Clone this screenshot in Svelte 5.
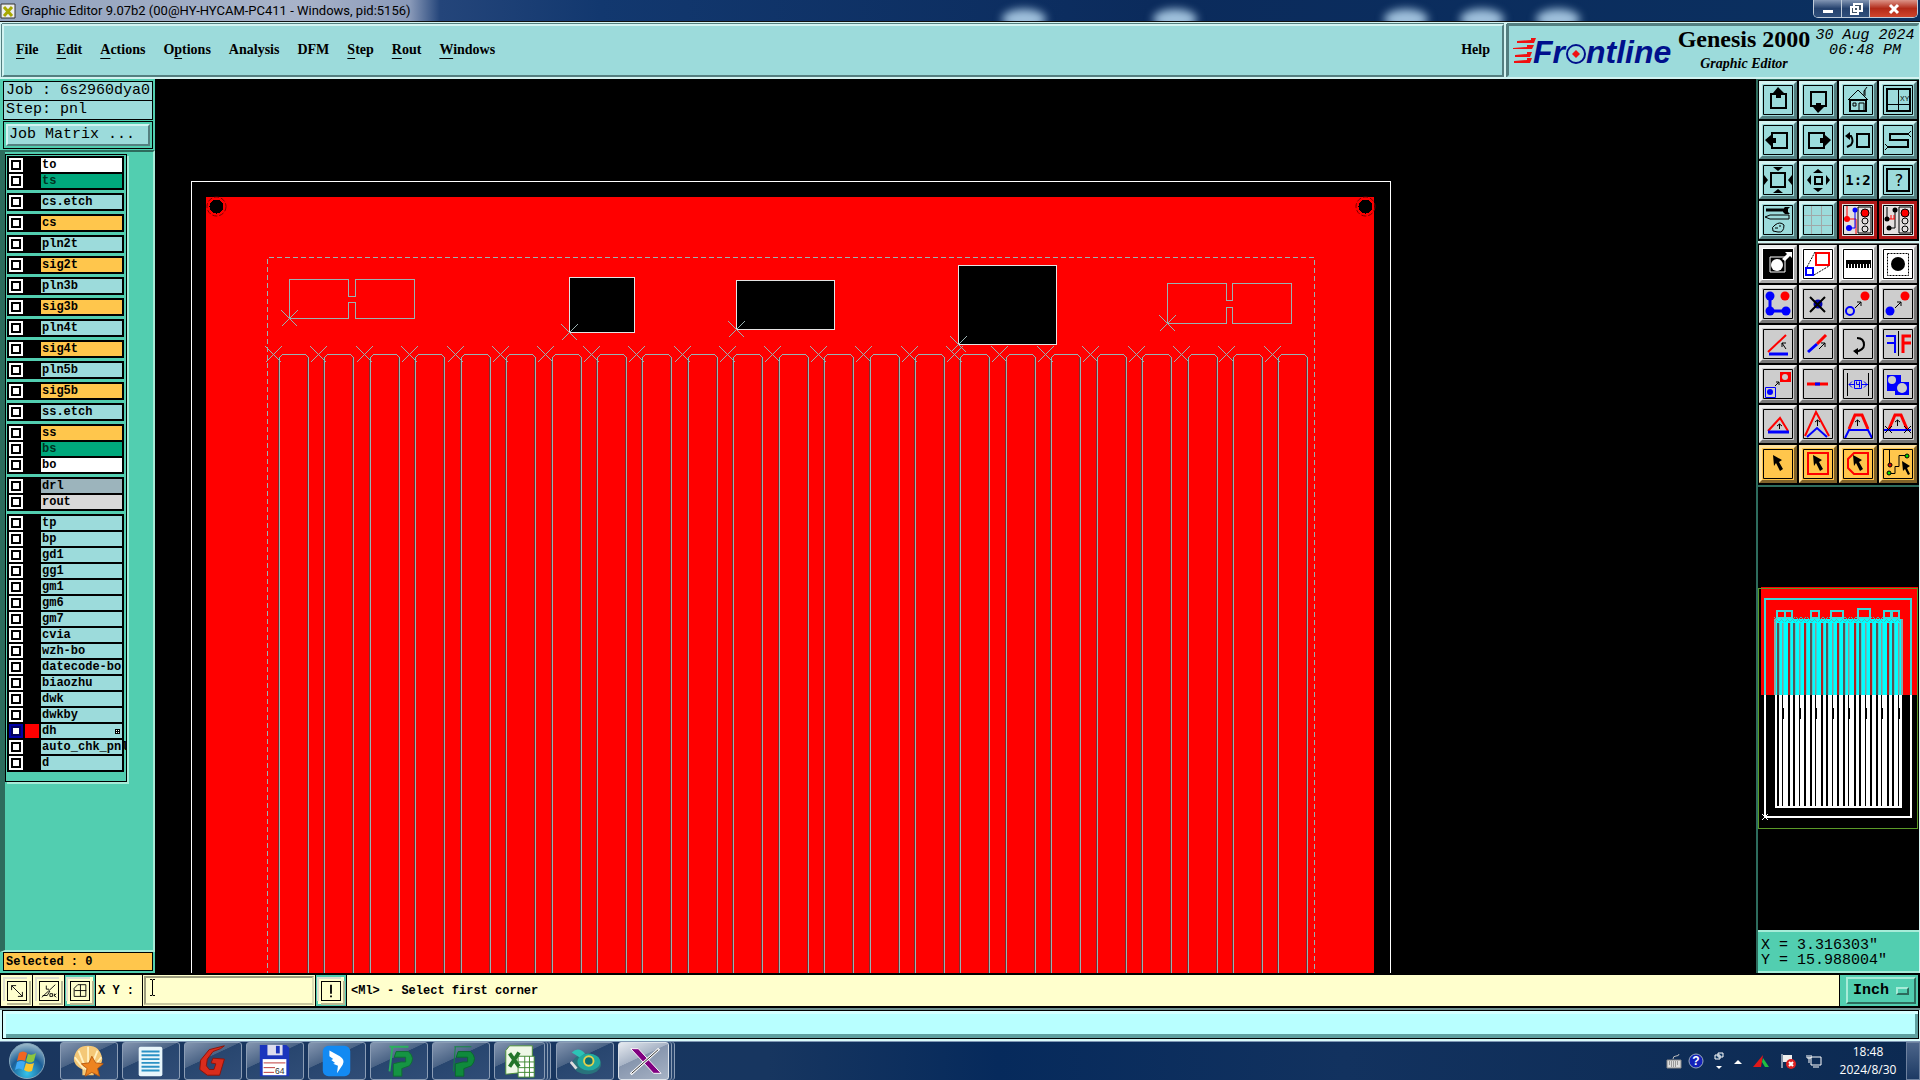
<script lang="ts">
  /**
   * Genesis 2000 graphic editor workspace: menu bar, layer list, panel view,
   * tool palette with overview map, command line and the desktop taskbar.
   */
  interface Layer { name: string; kind: string; active?: boolean }
  interface Tool { label: string; art: string; look?: string }

  const menus = [
    ["", "F", "ile"], ["", "E", "dit"], ["", "A", "ctions"], ["O", "p", "tions"], ["Analysis", "", ""],
    ["DFM", "", ""], ["", "S", "tep"], ["", "R", "out"], ["", "W", "indows"],
  ];

  const aqua = (...names: string[]): Layer[] => names.map((name) => ({ name, kind: "misc" }));
  const signal = (name: string): Layer[] => [{ name, kind: "signal" }];

  const groups: Layer[][] = [
    [{ name: "to", kind: "paste" }, { name: "ts", kind: "mask" }],
    aqua("cs.etch"), signal("cs"), aqua("pln2t"), signal("sig2t"), aqua("pln3b"), signal("sig3b"),
    aqua("pln4t"), signal("sig4t"), aqua("pln5b"), signal("sig5b"), aqua("ss.etch"),
    [{ name: "ss", kind: "signal" }, { name: "bs", kind: "mask" }, { name: "bo", kind: "paste" }],
    [{ name: "drl", kind: "drill" }, { name: "rout", kind: "rout" }],
    [
      ...aqua("tp", "bp", "gd1", "gg1", "gm1", "gm6", "gm7", "cvia", "wzh-bo", "datecode-bo", "biaozhu", "dwk", "dwkby"),
      { name: "dh", kind: "misc", active: true },
      ...aqua("auto_chk_pnl", "d"),
    ],
  ];

  const K = 'fill="none" stroke="#000"';
  const R = 'fill="none" stroke="#f00"';
  const B = 'fill="none" stroke="#00f"';

  const viewTools: Tool[] = [
    { label: "Pan up", art: `<path d="M8 9h15v14h-15z" ${K} stroke-width="2"/><path d="M15 2l6 6h-3v5h-5v-5h-3z"/>` },
    { label: "Pan down", art: `<path d="M8 7h15v14h-15z" ${K} stroke-width="2"/><path d="M15 28l6-6h-3v-4h-5v4h-3z"/>` },
    { label: "Home", art: `<path d="M5 15L15 5l10 10M21 10V6l3-4M22 11V5" ${K}/><path d="M7 14v12h16v-12M6 15h18" ${K} stroke-width="2"/><path d="M10 18h3v3h-3zM16 26v-8h5v8" ${K}/>` },
    { label: "Coordinates", art: `<path d="M4 4h23v22h-23z" ${K} stroke-width="2"/><path d="M15.5 4v22M4 19.5h23" ${K}/><text x="17" y="16" font-size="7" font-family="Liberation Sans">XY</text>` },
    { label: "Pan left", art: `<path d="M9 8h15v15h-15z" ${K} stroke-width="2"/><path d="M2 15l6-5v3h5v5h-5v3z"/>` },
    { label: "Pan right", art: `<path d="M6 8h15v15h-15z" ${K} stroke-width="2"/><path d="M28 15l-6-5v3h-5v5h5v3z"/>` },
    { label: "Previous view", art: `<path d="M14 9h12v13h-12z" ${K} stroke-width="2"/><path d="M4 11h4q3 5 0 9l-4 2" ${K} stroke-width="2"/><path d="M2 11l5-4v8z"/>` },
    { label: "Serpentine", art: `<path d="M25 9H7v6h18v7H5" ${K} stroke-width="2"/><path d="M25 9l3-3M25 9l3 3M5 22l-3-3M5 22l-3 3" ${K}/>` },
    { label: "Zoom in", art: `<path d="M8 8h14v14h-14z" ${K} stroke-width="2"/><path d="M15 6l-5-4h10zM15 24l-5 4h10zM5 15l-4-5v10zM25 15l4-5v10z"/>` },
    { label: "Zoom out", art: `<path d="M12 12h7v7h-7z" ${K} stroke-width="2"/><path d="M15 4l5 4h-10zM15 27l5-4h-10zM4 15l4-5v10zM27 15l-4-5v10z"/>` },
    { label: "Scale one to two", art: `<text x="15" y="20" font-size="14" font-weight="700" text-anchor="middle" font-family="DejaVu Sans Mono">1:2</text>` },
    { label: "What is", art: `<path d="M4 4h22v22h-22z" ${K} stroke-width="2"/><text x="16" y="21" font-size="16" text-anchor="middle" font-family="DejaVu Sans">?</text>` },
    { label: "Setup", art: `<path d="M3 5h17" ${K} stroke-width="3"/><path d="M27 2h-5l-2 2v3l2 2h5l-2-2v-3z"/><path d="M2 12l5-2h19v4h-19z" ${K}/><path d="M12 20q5-4 9 0q0 8-6 7l-5-1q-2-4 2-6zM12 23h3M16 21h2" ${K}/>` },
    { label: "Grid", art: `<path d="M8.500 0v30M18.500 0v30M0 10.500h30M0 20.500h30" fill="none" stroke="#a0a8a8"/>` },
    { label: "Netlist stop", look: "alert", art: `<path d="M15 2h13v26h-13z" ${K}/><circle cx="22" cy="8" r="4" fill="#f00" stroke="#000"/><circle cx="22" cy="16" r="3" ${K}/><circle cx="22" cy="24" r="3" ${K}/><path d="M4 0v14h9v16" ${R}/><path d="M12 5v18h-5" ${B}/><circle cx="12" cy="5" r="2.500" fill="#00f"/><circle cx="6" cy="23" r="3" fill="#00f"/><circle cx="4" cy="14" r="3" fill="#f00"/>` },
    { label: "Check stop", look: "alert", art: `<path d="M16 2h12v26h-12z" ${K}/><circle cx="22" cy="8" r="4" fill="#f00" stroke="#000"/><circle cx="22" cy="16" r="3" ${K}/><circle cx="22" cy="24" r="3" ${K}/><path d="M4 2v12M12 5v18h-5" ${K}/><path d="M6 14h6M8 10v4M11 10v4" ${R}/><circle cx="12" cy="5" r="2.500"/><circle cx="4" cy="14" r="2.500"/><circle cx="6" cy="23" r="2.500"/>` },
  ];

  const editTools: Tool[] = [
    { label: "Reference", look: "white", art: `<path d="M0 0h30v30h-30z"/><path d="M7 8h15v15h-15z" fill="none" stroke="#fff"/><circle cx="14" cy="16" r="6" fill="#fff"/><path d="M19 10l5-5-2-2h7v6l-2-2-5 5z" fill="#fff"/>` },
    { label: "Scale feature", look: "white", art: `<path d="M13 4h13v12h-13z" ${R} stroke-width="2"/><path d="M3 19h7v7h-7z" ${B} stroke-width="2"/><path d="M4 18L12 3M11 26L26 17" ${K} stroke-dasharray="2 1"/>` },
    { label: "Measure", look: "white", art: `<path d="M3 11h25v8h-1v-4h-1v4h-2v-4h-1v4h-2v-4h-1v4h-2v-4h-1v4h-2v-4h-1v4h-2v-4h-1v4h-2v-4h-1v4h-2v-4h-1v4h-2z"/>` },
    { label: "Pad", look: "white", art: `<path d="M4.500 4.500h21v22h-21z" ${K} stroke-dasharray="2 1"/><circle cx="15" cy="15" r="7"/>` },
    { label: "Move chain", art: `<path d="M7 7v15h16" ${B} stroke-width="3"/><g fill="#00f"><circle cx="7" cy="7" r="4.500"/><circle cx="7" cy="22" r="4.500"/><circle cx="23" cy="22" r="4.500"/></g><circle cx="22" cy="7" r="4.500" fill="#f00"/>` },
    { label: "Delete", art: `<circle cx="15" cy="15" r="4.500" fill="#00a"/><path d="M7 8l15 15M22 8L7 23" ${K} stroke-width="2"/>` },
    { label: "Move", art: `<circle cx="22" cy="7" r="4.500" fill="#f00"/><circle cx="7" cy="22" r="4" ${B} stroke-width="2"/><path d="M12 19l6-6M14 13h4v4" ${K}/>` },
    { label: "Copy", art: `<circle cx="22" cy="7" r="4.500" fill="#f00"/><circle cx="7" cy="22" r="4.500" fill="#00f"/><path d="M12 19l6-6M14 13h4v4" ${K}/>` },
    { label: "Rotate line", art: `<path d="M5 23L23 6" ${R} stroke-width="2"/><path d="M6 25h19" ${B} stroke-width="3"/><path d="M23 20l-4-6M19 18v-4h4" ${K}/>` },
    { label: "Split line", art: `<path d="M14 15L23 6" ${R} stroke-width="3"/><path d="M5 23L14 15" ${B} stroke-width="3"/><path d="M16 20l6-6M18 14h4v4" ${K}/>` },
    { label: "Rotate", art: `<path d="M14 9q7 0 7 7q0 5-9 7" ${K} stroke-width="2"/><path d="M10 22l5-3v7z"/>` },
    { label: "Mirror", art: `<path d="M15.500 2v25" ${K}/><path d="M3 7h9v17M12 14H4" ${B} stroke-width="2"/><path d="M28 7h-8v17M20 14h8" ${R} stroke-width="3"/>` },
    { label: "Change symbol", art: `<path d="M17 3h11v10h-11z" fill="#f00"/><circle cx="22" cy="8" r="3" fill="#ccc"/><path d="M2.500 18.500h10v10h-10z" ${B}/><circle cx="7" cy="23" r="3" fill="#00f"/><path d="M12 17l4-4M13 13h3v3" ${K}/>` },
    { label: "Join", art: `<path d="M4 15h21" ${R} stroke-width="3"/><path d="M12 15h5" ${B} stroke-width="3"/>` },
    { label: "Spacing", art: `<path d="M4.500 4v23M25.500 4v23" ${K}/><path d="M6 15.500h5M19 15.500h6M9 12.500l-3 3 3 3M21 12.500l3 3-3 3M11.500 11.500h7v8h-7zM13.500 12.500v3h3M16.500 12.500v6" ${B}/>` },
    { label: "Contourize", art: `<path d="M4 6h14v7h8v13h-14v-4h-8z" fill="#00f"/><circle cx="9" cy="11" r="4" fill="#ccc"/><circle cx="19" cy="19" r="5" fill="#ccc"/>` },
    { label: "Peak", art: `<path d="M5 22L17 9l8 13" ${R} stroke-width="2"/><path d="M5 23h21" ${B} stroke-width="3"/><path d="M16.500 20v-5M14 17l2.500-2 2.500 2" ${K}/>` },
    { label: "Raise", art: `<path d="M2 27L13 3l13 24" ${R} stroke-width="2"/><path d="M4 28l10-9 10 9" ${B} stroke-width="2"/><path d="M14.500 17v-6M12 13l2.500-2 2.500 2" ${K}/>` },
    { label: "Stretch", art: `<path d="M6 20L12 6h7l6 14" ${R} stroke-width="3"/><path d="M2 29l4-8h19l4 8" ${B} stroke-width="2"/><path d="M14.500 17v-6M12 13l2.500-2 2.500 2" ${K}/>` },
    { label: "Trim", art: `<path d="M6 20L12 6h6l6 14" ${R} stroke-width="3"/><path d="M1 21h27" ${B} stroke-width="2"/><path d="M2 17l7 7M9 17l-7 7M21 17l7 7M28 17l-7 7M14.500 17v-6M12 13l2.500-2 2.500 2" ${K}/>` },
    { label: "Select", look: "pick", art: `<path d="M10 6l9 5-3 2 4 7-3 2-4-8-2 3z"/>` },
    { label: "Select in box", look: "pick", art: `<path d="M5 4h20v21h-20z" ${R} stroke-width="2"/><path d="M10 6l9 5-3 2 4 7-3 2-4-8-2 3z"/>` },
    { label: "Select in polygon", look: "pick", art: `<path d="M11 4h14v21h-14l-6-6v-9z" ${R} stroke-width="2"/><path d="M10 6l9 5-3 2 4 7-3 2-4-8-2 3z"/>` },
    { label: "Select net", look: "pick", art: `<path d="M6.500 0v14M6 24.500h6v-7h4v-11h6" ${K}/><circle cx="7" cy="16" r="2" fill="#c00" stroke="#000"/><circle cx="6" cy="24" r="2" fill="#0d0" stroke="#000"/><circle cx="24" cy="7" r="2" fill="#0d0" stroke="#000"/><path d="M19 12l8 5-3 2 3 6-2 1-3-6-2 2z"/>` },
  ];

  // Routed slots repeat along the panel, each with its datum cross on the left.
  const slots = Array.from({ length: 23 }, (_, i) => {
    const x = Math.round(279 + i * 45.43) + 0.5;
    return { x, cross: Math.round(273 + i * 45.4) + 0.5 };
  });
  const windows = [
    { x: 569.5, y: 277.5, w: 65, h: 55 },
    { x: 736.5, y: 280.5, w: 98, h: 49 },
    { x: 958.5, y: 265.5, w: 98, h: 79 },
  ];
  const coupons = [
    { x: 289.5, y: 279.5, gap: 7, h: 39 },
    { x: 1167.5, y: 283.5, gap: 6, h: 40 },
  ];
  const datums = [
    ...coupons.map((c) => ({ x: c.x, y: c.y + c.h })),
    ...windows.map((w) => ({ x: w.x, y: w.y + w.h })),
    ...slots.map((s) => ({ x: s.cross, y: 354.5 })),
  ];

  const mapGaps = Array.from({ length: 23 }, (_, i) => ({ x: Math.round(1777 + i * 5.48), w: i % 3 === 1 ? 1 : 2 }));
  const mapParts = [[1777, 611, 8], [1785, 611, 7], [1811, 611, 8], [1831, 611, 12], [1858, 609, 12], [1884, 611, 7], [1892, 611, 7]];

  const glows = [1002, 1153, 1384, 1460, 1536];

  const apps = [
    { label: "Shell", art: `<path d="M19 3q13 0 15 14q0 7-9 11v6h-12v-6q-9-4-9-11q2-14 15-14z" fill="#f4c877"/><path d="M19 28V4M17 28L9 8M21 28L29 8M15 28L5 15M23 28L33 15" fill="none" stroke="#fff0c0" stroke-width="2"/><path d="M23 14l4 7 8 1-6 5 2 8-8-4-7 4 2-8-6-5 8-1z" fill="#ee8420" stroke="#b85a10"/>` },
    { label: "Notes", art: `<rect x="7" y="4" width="25" height="31" rx="2" fill="#e8f6fb"/><path d="M10 9h19M10 13h19M10 17h19M10 21h19M10 25h19M10 29h19" stroke="#2b91c4" stroke-width="2"/>` },
    { label: "G editor", art: `<path d="M32 3l-16 4-9 11-1 10 8 6h13l5-17-12-1-2 5 5 1-2 6h-5l-3-4 1-7 6-8 8-3z" fill="#d92c1c" stroke="#8c1208"/>` },
    { label: "Floppy 64", art: `<path d="M4 2h28l3 3v30h-31z" fill="#1b35bd"/><path d="M12 2h16v11h-16z" fill="#dde"/><path d="M21 3h4v8h-4z" fill="#1b35bd"/><path d="M7 17h25v17h-25z" fill="#fff"/><path d="M8 21h23M8 26h12M8 31h11" stroke="#b33"/><text x="20" y="33" font-size="9" fill="#333" font-family="Liberation Sans">64</text>` },
    { label: "Wing", art: `<rect x="5" y="3" width="29" height="32" rx="6" fill="#138af2"/><path d="M12 8l11 6q6 4 3 9l-6 9 1-8-5-2 2-1-4-3 2-1-4-3z" fill="#fff"/>` },
    { label: "P client", art: `<path d="M10 4h20M13 4l-3 26" fill="none" stroke="#2bb15e" stroke-width="2"/><path d="M17 9h13q8 7 1 15l-8 3v8h-9V22l8-2h5v-5h-12z" fill="#159443" stroke="#0f6e33"/>` },
    { label: "P server", art: `<path d="M13 4h18M14 4l-2 26" fill="none" stroke="#0f8a3c"/><path d="M17 9h13q8 7 1 15l-8 3v8h-9V22l8-2h5v-5h-12z" fill="#0f8a3c" stroke="#0a6a2c"/>` },
    { label: "Spreadsheet", stacked: true, art: `<path d="M9 3h24v27l-28 3V8z" fill="#eef8e6" stroke="#4d9137"/><path d="M18 14h17v22h-17z" fill="#fff" stroke="#3d8730"/><path d="M18 20h17M18 26h17M18 31h17M25 14v22M30 14v22" stroke="#3d8730"/><path d="M9 11l10 14M19 10L9 25" stroke="#23752a" stroke-width="4"/>` },
    { label: "Viewer", art: `<ellipse cx="22" cy="22" rx="15" ry="11" fill="#29737c"/><ellipse cx="24" cy="20" rx="12" ry="9" fill="#20a99f"/><circle cx="24" cy="19" r="5" fill="#0b6f74" stroke="#e3d04a" stroke-width="2"/><path d="M6 10q7-7 14 1l-6 4z" fill="#2cc4b6"/><path d="M5 20l6 7" stroke="#ddd" stroke-width="3"/>` },
    { label: "X server", stacked: true, current: true, art: `<path d="M6 6h8l24 26h-8z" fill="#800080" stroke="#fff"/><path d="M36 6L6 33" stroke="#fff" stroke-width="3"/><path d="M35 7L7 32" stroke="#222"/>` },
  ];

  let coords = $state("");
  let unit = $state("Inch");
</script>

{#snippet tool(t: Tool)}
  <button class="tool {t.look ?? ''}" type="button" aria-label={t.label}>
    <svg viewBox="0 0 30 30">{@html t.art}<path d="M.5 .5h29v29h-29z" fill="none" stroke="#000" /></svg>
  </button>
{/snippet}

<div class="desktop">
  <header class="title">
    {#each glows as x}<i class="glow" style:left="{x}px"></i>{/each}
    <svg class="app-icon" viewBox="0 0 16 16"><path d="M1 1h14v14h-14z" fill="#eee" stroke="#333" /><path d="M4 4l8 9M12 4l-8 9" stroke="#a8a800" stroke-width="3" /></svg>
    <span class="title-text">Graphic Editor 9.07b2 (00@HY-HYCAM-PC411 - Windows, pid:5156)</span>
    <div class="win-buttons">
      <button type="button" aria-label="Minimize"><svg viewBox="0 0 16 14"><path d="M3 8h10v3h-10z" fill="#fff" /></svg></button>
      <button type="button" aria-label="Restore"><svg viewBox="0 0 16 14"><path d="M6 2h8v7h-8zM3 5h7v7h-7z" fill="#456" stroke="#fff" stroke-width="2" /></svg></button>
      <button type="button" class="close" aria-label="Close"><svg viewBox="0 0 16 14"><path d="M4 3l8 8M12 3l-8 8" stroke="#fff" stroke-width="3" /></svg></button>
    </div>
  </header>

  <div class="menubar">
    <nav class="menus" aria-label="Main menu">
      {#each menus as [before, key, after]}
        <button type="button">{before}<u>{key}</u>{after}</button>
      {/each}
      <button type="button" class="help">Help</button>
    </nav>
    <div class="brand">
      <svg class="logo" viewBox="0 0 162 48" role="img" aria-label="Frontline">
        <path d="M4 17l14-1v-2h5l-2 5h-17zM0 24l14-1v-2h7l-2 4h-19zM2 31l12-1v-2h5l-2 5h-15zM1 37l13-1v-2h5l-2 5h-16z" fill="#f01010" />
        <g class="logo-word"><text x="20" y="39">Fr</text><text x="73" y="39">ntline</text></g>
        <circle cx="63" cy="30" r="9" fill="none" stroke="#00108c" stroke-width="2" />
        <path d="M63 26l4 4-4 4-4-4z" fill="#f01010" />
      </svg>
      <div class="product"><strong>Genesis 2000</strong><em>Graphic Editor</em></div>
      <time class="stamp">30 Aug 2024<br />06:48 PM</time>
    </div>
  </div>

  <main class="work">
    <aside class="left">
      <div class="jobinfo">
        <div class="field">Job : 6s2960dya0</div>
        <div class="field">Step: pnl</div>
      </div>
      <div class="matrix"><button type="button">Job Matrix ...</button></div>
      <div class="layers">
        <div class="layer-frame">
          {#each groups as group}
            <div class="group">
              {#each group as layer (layer.name)}
                <label class="layer" class:active={layer.active}>
                  <input type="checkbox" />
                  <span class="swatch"></span>
                  <span class="name {layer.kind}">{layer.name}</span>
                  {#if layer.active}<svg class="mark" viewBox="0 0 5 5"><path d="M0 0h5v5h-5z" /><path d="M1 1h1v1h-1zM3 1h1v1h-1zM1 3h1v1h-1zM3 3h1v1h-1z" fill="#fff" /></svg>{/if}
                </label>
              {/each}
            </div>
          {/each}
        </div>
      </div>
      <div class="selected">Selected : 0</div>
    </aside>

    <div class="view">
      <svg class="drawing" aria-label="Panel view">
        <g transform="translate(-155 -79)" shape-rendering="crispEdges">
          <path d="M191.500 2000V181.500H1390.500V2000" class="outline" />
          <path d="M206 2000V197H1374V2000z" class="copper" />
          {#each [216.5, 1365.5] as cx}
            <circle {cx} cy="206.500" r="9.500" class="hole-ring" />
            <circle {cx} cy="206.500" r="7" />
          {/each}
          <path d="M267.500 2000V257.500H1314.500V2000" class="trace" stroke-dasharray="5 3" />
          {#each windows as w}
            <rect x={w.x} y={w.y} width={w.w} height={w.h} class="window" />
          {/each}
          {#each coupons as c}
            <path d="M{c.x} {c.y}h59v17h{c.gap}v-17h59v{c.h}h-59v-16h-{c.gap}v16h-59z" class="trace" />
          {/each}
          {#each slots as s}
            <path d="M{s.x - 1} 2000V357.500M{s.x + 28} 2000V357.500" class="edge" />
            <path d="M{s.x} 2000V357.500l3-3h23l3 3V2000" class="trace" />
          {/each}
          {#each datums as d}
            <path d="M{d.x - 8} {d.y - 8}l16 16M{d.x + 8} {d.y - 8}l-16 16" class="trace" />
          {/each}
        </g>
      </svg>
    </div>

    <aside class="right">
      <div class="palette">
        {#each viewTools as t (t.label)}{@render tool(t)}{/each}
      </div>
      <div class="palette edit">
        {#each editTools as t (t.label)}{@render tool(t)}{/each}
      </div>
      <div class="map">
        <svg class="drawing" aria-label="Overview">
          <g transform="translate(-1758 -487)" shape-rendering="crispEdges">
            <path d="M1761 587h157v108h-157z" fill="#f00" />
            <path d="M1758.500 588.500h159v240h-159z" fill="none" stroke="#5a9a28" />
            <path d="M1765 695v122h146v-122" fill="none" stroke="#fff" stroke-width="2" />
            <path d="M1765 695v-96h146v96" fill="none" stroke="#3fd8d8" stroke-width="2" />
            <path d="M1775 695h127v113h-127z" fill="#fff" />
            <path d="M1775 619h127v76h-127z" fill="#0ff" />
            <path d="M1775 619v76M1902 619v76" fill="none" stroke="#8aa" stroke-width="2" />
            {#each mapGaps as g, i}
              <rect x={g.x} y="623" width={g.w} height="72" fill={["#555", "#8a9a9a", "#b02020"][i % 3]} />
              <rect x={g.x + g.w} y="623" width="1" height="72" fill="#4cc" />
              <rect x={g.x} y="695" width={g.w} height="111" />
              <rect x={g.x} y="708" width="2" height="11" />
              <path d="M{g.x - 3} 617l5 5M{g.x + 2} 617l-5 5" stroke="#4bb" />
            {/each}
            {#each mapParts as [x, y, w]}
              <rect {x} {y} width={w} height={618 - y} fill="none" stroke="#3fd8d8" stroke-width="2" />
            {/each}
            <path d="M1762 814l6 6M1768 814l-6 6" stroke="#fff" />
          </g>
        </svg>
      </div>
      <div class="readout">X = 3.316303"<br />Y = 15.988004"</div>
    </aside>
  </main>

  <div class="command">
    <button type="button" class="cmd" aria-label="Snap off"><svg viewBox="0 0 20 20"><path d="M4 4l12 12M4 9V4h5M16 11v5h-5" fill="none" stroke="#000" /></svg></button>
    <button type="button" class="cmd" aria-label="Angle"><svg viewBox="0 0 20 20"><path d="M2 17L17 3M3 15h5l3-5M7 4v4h3M11 13h3v3h-3zM16 13v3M18 13l-2 2 2 2" fill="none" stroke="#000" /></svg></button>
    <button type="button" class="cmd framed" aria-label="Grid snap"><svg viewBox="0 0 20 20"><path d="M3.500 7l4-4h9v13h-13zM4 9.500h13M10.500 3v13" fill="none" stroke="#000" /></svg></button>
    <label class="xy-label" for="xy">X Y :</label>
    <div class="xy-box"><input id="xy" type="text" bind:value={coords} /><svg class="caret" viewBox="0 0 7 17"><path d="M1 .5h2l.5 1 .5-1h2M3.500 1v15M1 16.500h2l.5-1 .5 1h2" fill="none" stroke="#000" /></svg></div>
    <button type="button" class="cmd framed" aria-label="Alert"><svg viewBox="0 0 20 20"><path d="M9 3h2v10h-2zM9 15h2v2h-2z" /></svg></button>
    <output class="message">&lt;Ml&gt; - Select first corner</output>
    <div class="unit">
      <select aria-label="Unit" bind:value={unit}><option>Inch</option><option>mm</option></select>
      <i class="knob"></i>
    </div>
  </div>

  <div class="status"><div class="status-field"></div></div>

  <footer class="taskbar">
    <button type="button" class="start" aria-label="Start">
      <svg viewBox="0 0 38 38">
        <defs><radialGradient id="orb" cx="50%" cy="85%" r="85%"><stop offset="0" stop-color="#35c4ea" /><stop offset="55%" stop-color="#1c5f98" /><stop offset="1" stop-color="#9fbccb" /></radialGradient></defs>
        <circle cx="19" cy="19" r="17.500" fill="url(#orb)" stroke="#87a8bd" />
        <path d="M11 11q4-3 8 0l-2 8q-4-2-8 0z" fill="#f06522" /><path d="M20 12q4 2 8-1l-2 8q-4 3-8 0z" fill="#8cc63f" />
        <path d="M9 20q4-2 8 0l-2 8q-4-3-8 0z" fill="#3fa9f5" /><path d="M18 21q4 2 8 0l-2 8q-4 2-8-1z" fill="#fcc52c" />
      </svg>
    </button>
    {#each apps as app (app.label)}
      <div class="slot" class:stacked={app.stacked}>
        <button type="button" class="task" class:current={app.current} aria-label={app.label}><svg viewBox="0 0 40 38">{@html app.art}</svg></button>
      </div>
    {/each}
    <div class="tray">
      <svg width="16" height="16" viewBox="0 0 16 16"><path d="M1 7h14v8h-14z" fill="#ddd" stroke="#888" /><path d="M3 9h10M3 11h10M5 13h6" stroke="#555" stroke-dasharray="1 1" /><path d="M7 6q0-3 3-3t3-2" fill="none" stroke="#bbb" /></svg>
      <svg width="16" height="16" viewBox="0 0 16 16"><circle cx="8" cy="8" r="7" fill="#1422b8" stroke="#9ab" /><text x="8" y="12" font-size="12" font-weight="700" fill="#fff" text-anchor="middle" font-family="Liberation Sans">?</text></svg>
      <svg width="10" height="18" viewBox="0 0 10 18"><path d="M4 1h5v4h-5zM1 3h5v4h-5z" fill="#123a66" stroke="#fff" /><path d="M2 14h6l-3 3z" fill="#fff" /></svg>
      <svg width="8" height="16" viewBox="0 0 8 16"><path d="M0 11l4-4 4 4z" fill="#fff" /></svg>
      <svg width="18" height="16" viewBox="0 0 18 16"><path d="M1 14L11 2l-2 12z" fill="#e01818" /><path d="M11 5l6 9h-4l-3-5z" fill="#20c040" /></svg>
      <svg width="16" height="16" viewBox="0 0 16 16"><path d="M2 1v14" stroke="#fff" /><path d="M3 2h9v7h-9z" fill="#eee" /><circle cx="11" cy="11" r="5" fill="#d22" /><path d="M9 9l4 4M13 9l-4 4" stroke="#fff" stroke-width="2" /></svg>
      <svg width="16" height="16" viewBox="0 0 16 16"><path d="M5 4h10v8h-10zM3 2v8M1 2v3h4v-3M7 14h6" fill="none" stroke="#fff" /></svg>
      <time class="clock">18:48<br />2024/8/30</time>
      <button type="button" class="peek" aria-label="Show desktop"></button>
    </div>
  </footer>
</div>

<style>
  :global(body) { margin: 0; background: #000; }
  .desktop {
    --aqua: #9cdbdb; --aqua-hi: #d3f3f1; --aqua-lo: #547f80;
    --teal: #52ceb0; --teal-hi: #a6ecd8; --teal-lo: #2d6c5d;
    --amber: #ffc64c; --cream: #ffffcd;
    --mono: "Liberation Mono", monospace; --serif: "Liberation Serif", serif; --ui: "Open Sans", sans-serif;
    display: flex; flex-direction: column; min-height: 100vh; overflow: hidden; color: #000; font-family: var(--mono);
  }
  button, input, select { font: inherit; color: inherit; border: 0; padding: 0; margin: 0; box-sizing: border-box; border-radius: 0; background: none; }
  svg { display: block; }

  .title { position: relative; display: flex; align-items: center; height: 21px; border-bottom: 1px solid #111; overflow: hidden; background: linear-gradient(90deg, #93a3be, #a8b3c9 300px, #8999b8 410px, #24457a 440px, #12386f 600px, #0b2b5c 60%, #0b3060); }
  .glow { position: absolute; top: 9px; width: 44px; height: 20px; border-radius: 50%; background: #9fc0dc; filter: blur(4px); }
  .app-icon { width: 16px; height: 16px; }
  .title-text { margin-left: 5px; font-family: Roboto, sans-serif; font-size: 13px; line-height: 20px; white-space: nowrap; }
  .win-buttons { position: relative; display: flex; align-self: flex-start; margin-left: auto; margin-right: 2px; border: 1px solid #c0ccda; border-top: 0; border-radius: 0 0 5px 5px; overflow: hidden; }
  .win-buttons button { width: 28px; height: 17px; display: grid; place-items: center; background: linear-gradient(#8296b4, #25426e 50%, #304f7b); border-right: 1px solid #c0ccda; }
  .win-buttons .close { width: 47px; border: 0; background: linear-gradient(#dc9488, #b22a18 50%, #d0452c); }
  .win-buttons svg { width: 16px; height: 14px; }

  .menubar { display: flex; height: 57px; background: var(--aqua-hi); }
  .menus, .brand { box-sizing: border-box; display: flex; align-items: center; background: var(--aqua); border: 2px solid var(--aqua-hi); border-right-color: var(--aqua-lo); border-bottom-color: var(--aqua-lo); box-shadow: 0 -1px var(--aqua-lo), -1px 0 var(--aqua-lo); }
  .menus { flex: 1; gap: 18px; padding: 0 12px 2px; margin: 2px 3px 2px 2px; font: 700 14px/18px var(--serif); }
  .menus u { text-underline-offset: 4px; }
  .help { margin-left: auto; }
  .brand { width: 412px; margin: 2px 1px 2px 0; border-color: var(--aqua); align-items: flex-start; border-left-color: var(--aqua-lo); border-top-color: var(--aqua-lo); }
  .logo { width: 162px; height: 48px; margin: -2px 0 0 4px; }
  .logo-word { font: italic 700 32px "Liberation Sans", sans-serif; fill: #00108c; }
  .product { display: flex; flex-direction: column; align-items: center; width: 138px; font-family: var(--serif); white-space: nowrap; }
  .product strong { font-size: 24px; line-height: 26px; }
  .product em { font-size: 14px; font-weight: 700; line-height: 24px; }
  .stamp { flex: 1; text-align: center; font-style: italic; font-size: 15px; line-height: 15px; padding-top: 2px; white-space: nowrap; }

  .work { flex: 1; display: flex; background: #000; }
  .left { box-sizing: border-box; width: 155px; display: flex; flex-direction: column; background: var(--teal); padding-top: 2px; }
  .jobinfo { margin: 0 2px 1px 3px; border: 1px solid #000; background: #000; display: grid; gap: 1px; }
  .field { background: var(--aqua); height: 18px; padding-left: 2px; font-size: 15px; line-height: 18px; white-space: nowrap; }
  .matrix { margin: 0 2px 1px 3px; border: 1px solid #000; padding: 2px; display: flex; }
  .matrix button { flex: 1; height: 22px; text-align: left; padding-left: 1px; font-size: 15px; line-height: 18px; background: var(--aqua); border: 2px solid var(--aqua-hi); border-right-color: var(--aqua-lo); border-bottom-color: var(--aqua-lo); }
  .layers { flex: 1; border: 2px solid var(--teal-lo); border-left-width: 5px; border-right-color: var(--teal-hi); border-bottom-color: var(--teal-hi); padding-top: 2px; }
  .layer-frame { width: 117px; border: 1px solid #000; box-shadow: 2px 2px var(--teal-hi); padding: 1px 2px 9px 1px; display: flex; flex-direction: column; gap: 3px; overflow: hidden; }
  .group { background: #000; border: 2px solid #000; display: grid; gap: 2px; }
  .layer { position: relative; display: grid; grid-template-columns: 14px 14px 81px; column-gap: 2px; height: 14px; font-weight: 700; font-size: 12px; line-height: 15px; }
  .layer input { appearance: none; width: 14px; height: 14px; background: #fff; border: 2px solid #fff; box-shadow: inset 0 0 0 2px #000; }
  .layer.active input { border-color: #0000a8; box-shadow: inset 0 0 0 2px #000060; }
  .layer.active .swatch { background: #f00; }
  .name { padding-left: 1px; white-space: nowrap; height: 14px; }
  .misc { background: var(--aqua); }
  .signal { background: var(--amber); }
  .paste { background: #fff; }
  .mask { background: #00a87c; color: #003322; }
  .drill { background: #9cb4bc; }
  .rout { background: #d8d8d8; }
  .mark { position: absolute; right: 2px; top: 5px; width: 5px; height: 5px; }
  .selected { margin: 0 2px 2px 3px; border: 1px solid #000; background: var(--amber); height: 17px; padding-left: 2px; font-weight: 700; font-size: 12px; line-height: 18px; }

  .view { flex: 1; min-width: 0; position: relative; overflow: hidden; }
  .drawing { position: absolute; inset: 0; width: 100%; height: 100%; }
  .outline { fill: none; stroke: #fff; }
  .copper { fill: #f00; }
  .trace { fill: none; stroke: #9ab2b2; }
  .edge { fill: none; stroke: #7c3030; }
  .window { fill: #000; stroke: #e4e4e4; }
  .hole-ring { fill: none; stroke: #700; stroke-dasharray: 5 2; shape-rendering: auto; }

  .right { box-sizing: border-box; width: 164px; display: flex; flex-direction: column; border-left: 2px solid var(--teal-lo); border-right: 1px solid var(--aqua-hi); background: #000; }
  .palette { display: grid; grid-template-columns: repeat(4, 38px); gap: 2px; padding: 1px 0 2px 1px; border-top: 1px solid var(--teal-lo); border-bottom: 2px solid var(--aqua-hi); --face: var(--aqua); --hi: var(--aqua-hi); --lo: var(--aqua-lo); }
  .edit { --face: #cdcdcd; --hi: #ededed; --lo: #777; border-color: #666; border-bottom-color: var(--teal-lo); }
  .palette .tool { width: 38px; height: 38px; padding: 1px; background: var(--face); border: 3px solid var(--hi); border-right-color: var(--lo); border-bottom-color: var(--lo); }
  .palette .alert { background: #e4dfdf; border-color: #b01818; }
  .palette .white { background: #fff; border-right-color: #aaa; border-bottom-color: #aaa; }
  .palette .pick { --face: var(--amber); --hi: #ffe2a0; --lo: #80632a; }
  .tool svg { width: 30px; height: 30px; overflow: hidden; }
  .map { position: relative; flex: 1; overflow: hidden; }
  .readout { height: 43px; box-sizing: border-box; background: var(--teal); border-top: 2px solid var(--teal-hi); border-bottom: 2px solid var(--teal-hi); padding: 6px 2px 0 3px; font-size: 15px; line-height: 15px; white-space: nowrap; }

  .command { display: flex; height: 31px; padding: 2px 2px 2px 1px; gap: 1px; background: #000; }
  .cmd { width: 31px; height: 31px; display: grid; place-items: center; background: var(--cream); }
  .cmd svg { width: 20px; height: 20px; border: 1px solid #000; box-sizing: border-box; box-shadow: 0 0 0 2px var(--cream), 2px 2px 0 2px #b8b894, -2px -2px 0 2px #deded0; }
  .command .framed { width: 30px; border: 2px solid var(--teal); }
  .xy-label { box-sizing: border-box; width: 46px; padding-left: 2px; background: var(--cream); font-weight: 700; font-size: 12px; line-height: 33px; white-space: pre; }
  .xy-box { position: relative; width: 172px; display: flex; background: var(--cream); padding: 1px; box-sizing: border-box; }
  .xy-box input { width: 100%; padding: 0 4px; background: var(--cream); border: 2px solid #9c9c7c; border-right-color: #dedeb4; border-bottom-color: #c8c8a0; font-size: 12px; }
  .caret { position: absolute; left: 6px; top: 4px; width: 7px; height: 17px; }
  .message { flex: 1; padding-left: 4px; background: var(--cream); font-weight: 700; font-size: 12px; line-height: 33px; height: 31px; }
  .unit { position: relative; width: 78px; box-sizing: border-box; padding: 2px 2px 2px 6px; background: var(--teal); }
  .unit select { appearance: none; width: 100%; height: 27px; padding-left: 5px; font-weight: 700; font-size: 15px; background: var(--teal); border: 2px solid var(--teal-hi); border-right-color: var(--teal-lo); border-bottom-color: var(--teal-lo); }
  .knob { position: absolute; right: 9px; top: 12px; width: 9px; height: 4px; border: 2px solid var(--teal-hi); border-right-color: var(--teal-lo); border-bottom-color: var(--teal-lo); pointer-events: none; }

  .status { box-sizing: border-box; height: 33px; padding: 0 1px 2px 2px; border-top: 2px solid #6f9090; background: #d9fafa; }
  .status-field { box-sizing: border-box; height: 29px; border: 1px solid #000; background: #b8ffff; box-shadow: inset 3px 3px #d4ffff, inset -3px -4px #5fa0a0; }

  .taskbar { display: flex; height: 39px; padding-left: 8px; background: linear-gradient(90deg, #1a365e, #173660 40%, #062a5c 52%, #12325f 70%, #0c2a52); box-shadow: inset 0 1px #7f97b4; font-family: var(--ui); }
  .start { width: 38px; margin-right: 14px; }
  .start svg { width: 38px; height: 38px; }
  .slot { width: 62px; }
  .task { width: 58px; height: 38px; margin-top: 1px; display: grid; place-items: center; border: 1px solid #8b9db5; border-radius: 3px; background: linear-gradient(155deg, #8496b0, #4b6486 40%, #28466f 41%, #304d77); }
  .stacked .task { width: 51px; box-shadow: 2px 0 #28466f, 3px 0 #8b9db5, 5px 0 #28466f, 6px 0 #8b9db5; }
  .task.current { background: linear-gradient(155deg, #e6eaf0, #a8b4c6 40%, #8796ae 41%, #a6b2c4); border-color: #dde3ea; }
  .task svg { width: 38px; height: 36px; }
  .tray { margin-left: auto; display: flex; align-items: center; gap: 10px; color: #fff; }
  .tray > svg:first-child { margin-right: -4px; }
  .clock { width: 72px; margin-right: -8px; text-align: center; font-size: 12px; line-height: 18px; }
  .peek { width: 14px; height: 38px; border: 1px solid #6d819f; background: linear-gradient(#4c658a, #1d3a64); }
</style>
